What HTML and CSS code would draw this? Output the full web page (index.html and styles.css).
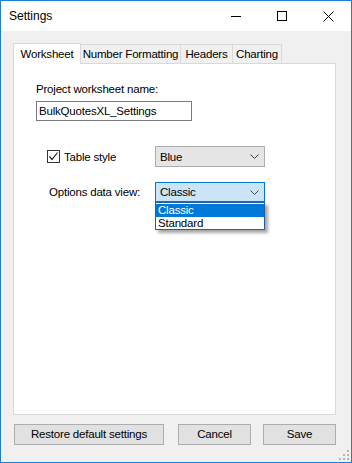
FILE: index.html
```html
<!DOCTYPE html>
<html>
<head>
<meta charset="utf-8">
<link rel="stylesheet" href="styles.css">
</head>
<body>
<div class="window">
  <div class="titlebar">
    <div class="title">Settings</div>
    <div class="ctl"><svg width="10" height="10" viewBox="0 0 10 10"><path d="M0 5.5H10" stroke="#000" stroke-width="1"/></svg></div>
    <div class="ctl"><svg width="10" height="10" viewBox="0 0 10 10"><rect x="0.5" y="0.5" width="9" height="9" fill="none" stroke="#000" stroke-width="1"/></svg></div>
    <div class="ctl"><svg width="11" height="11" viewBox="0 0 11 11"><path d="M0.5 0.5L10.5 10.5M10.5 0.5L0.5 10.5" stroke="#000" stroke-width="1"/></svg></div>
  </div>
  <div class="client">
    <div class="tabs">
      <div class="tab active">Worksheet</div>
      <div class="tab t2">Number Formatting</div>
      <div class="tab t3">Headers</div>
      <div class="tab t4">Charting</div>
    </div>
    <div class="panel">
      <div class="label">Project worksheet name:</div>
      <div class="textbox">BulkQuotesXL_Settings</div>
      <div class="row row1">
        <div class="check">
          <span class="box"><svg width="11" height="11" viewBox="0 0 11 11"><path d="M1.5 5.5L4 8.5L9.5 1.5" fill="none" stroke="#222" stroke-width="1.2"/></svg></span>
          <span>Table style</span>
        </div>
        <div class="combo">
          <span>Blue</span>
          <svg width="9" height="5" viewBox="0 0 9 5"><path d="M0.5 0.5L4.5 4.5L8.5 0.5" fill="none" stroke="#444" stroke-width="1"/></svg>
        </div>
      </div>
      <div class="row row2">
        <div class="label2">Options data view:</div>
        <div class="combo-wrap">
          <div class="combo focus">
            <span>Classic</span>
            <svg width="9" height="5" viewBox="0 0 9 5"><path d="M0.5 0.5L4.5 4.5L8.5 0.5" fill="none" stroke="#444" stroke-width="1"/></svg>
          </div>
          <div class="dropdown">
            <div class="item sel">Classic</div>
            <div class="item">Standard</div>
          </div>
        </div>
      </div>
    </div>
    <div class="buttons">
      <div class="btn restore">Restore default settings</div>
      <div class="btn cancel">Cancel</div>
      <div class="btn save">Save</div>
    </div>
    <svg class="grip" width="10" height="10" viewBox="0 0 10 10">
      <rect x="8" y="0" width="2" height="2" fill="#b5b5b5"/>
      <rect x="4" y="4" width="2" height="2" fill="#b5b5b5"/>
      <rect x="8" y="4" width="2" height="2" fill="#b5b5b5"/>
      <rect x="0" y="8" width="2" height="2" fill="#b5b5b5"/>
      <rect x="4" y="8" width="2" height="2" fill="#b5b5b5"/>
      <rect x="8" y="8" width="2" height="2" fill="#b5b5b5"/>
    </svg>
  </div>
</div>
</body>
</html>
```
FILE: styles.css
```css
* { box-sizing: border-box; }
html, body { margin: 0; padding: 0; }
body {
  font-family: "Liberation Sans", Arial, sans-serif;
  font-size: 11.5px;
  letter-spacing: -0.2px;
  color: #000;
  background: #fff;
}
.window {
  width: 352px;
  height: 463px;
  border: 1px solid #1c7fd6;
  display: flex;
  flex-direction: column;
  background: #f0f0f0;
}
.titlebar {
  height: 30px;
  background: #fff;
  display: flex;
  align-items: center;
}
.title {
  flex: 1;
  padding-left: 8px;
  font-size: 12px;
  letter-spacing: 0;
  line-height: 16px;
  padding-bottom: 1px;
}
.ctl {
  width: 46px;
  height: 30px;
  display: flex;
  align-items: center;
  justify-content: center;
  flex-shrink: 0;
}
.client {
  flex: 1;
  position: relative;
  padding: 12px 15px 17px 12px;
  display: flex;
  flex-direction: column;
}
.tabs {
  display: flex;
  align-items: flex-end;
  height: 21px;
  margin-bottom: -1px;
  position: relative;
  z-index: 1;
}
.tab {
  height: 19px;
  border: 1px solid #d9d9d9;
  border-bottom: none;
  background: #f0f0f0;
  line-height: 18px;
  margin-left: -1px;
  margin-bottom: 1px;
  text-align: center;
  white-space: nowrap;
  flex-shrink: 0;
}
.tab.active {
  width: 68px;
  height: 21px;
  background: #fff;
  line-height: 20px;
  margin-left: 0;
  margin-bottom: 0;
  position: relative;
  z-index: 2;
}
.t2 { width: 101px; }
.t3 { width: 53px; }
.t4 { width: 50px; }
.panel {
  height: 352px;
  background: #fff;
  border: 1px solid #d9d9d9;
  padding: 17px 0 0 22px;
}
.label {
  line-height: 16px;
}
.textbox {
  margin-top: 4px;
  width: 156px;
  height: 20px;
  border: 1px solid #7a7a7a;
  padding-left: 2px;
  line-height: 18px;
}
.row {
  display: flex;
  align-items: center;
  height: 21px;
}
.row1 { margin-top: 25px; }
.row2 { margin-top: 15px; height: 20px; }
.check {
  width: 119px;
  flex-shrink: 0;
  padding-left: 11px;
  display: flex;
  align-items: center;
  gap: 4px;
}
.box {
  width: 13px;
  height: 13px;
  border: 1px solid #333;
  display: flex;
  align-items: center;
  justify-content: center;
  background: #fff;
  flex-shrink: 0;
}
.combo {
  width: 110px;
  height: 21px;
  flex-shrink: 0;
  border: 1px solid #adadad;
  background: #e5e5e5;
  display: flex;
  align-items: center;
  justify-content: space-between;
  padding: 0 5px 0 4px;
}
.label2 {
  width: 119px;
  flex-shrink: 0;
  padding-left: 13px;
  white-space: nowrap;
}
.combo-wrap {
  position: relative;
  flex-shrink: 0;
}
.combo.focus {
  height: 20px;
  border-color: #0078d7;
  background: #cce4f7;
}
.dropdown {
  position: absolute;
  left: 0;
  top: 20px;
  width: 110px;
  height: 28px;
  border: 1px solid #1f5fa6;
  background: #fff;
  box-shadow: 3px 3px 3px rgba(0,0,0,0.35);
  padding-top: 1px;
  z-index: 5;
}
.item {
  height: 13px;
  line-height: 13px;
  padding-left: 2px;
  overflow: hidden;
}
.item.sel {
  background: #0078d7;
  color: #fff;
}
.buttons {
  display: flex;
  margin-top: 9px;
  margin-left: 1px;
}
.btn {
  height: 21px;
  border: 1px solid #adadad;
  background: #e1e1e1;
  display: flex;
  align-items: center;
  justify-content: center;
  padding-bottom: 1px;
  flex-shrink: 0;
}
.restore { width: 150px; }
.cancel { width: 73px; margin-left: 14px; }
.save { width: 73px; margin-left: 12px; }
.grip {
  position: absolute;
  right: 2px;
  bottom: 2px;
}
```
